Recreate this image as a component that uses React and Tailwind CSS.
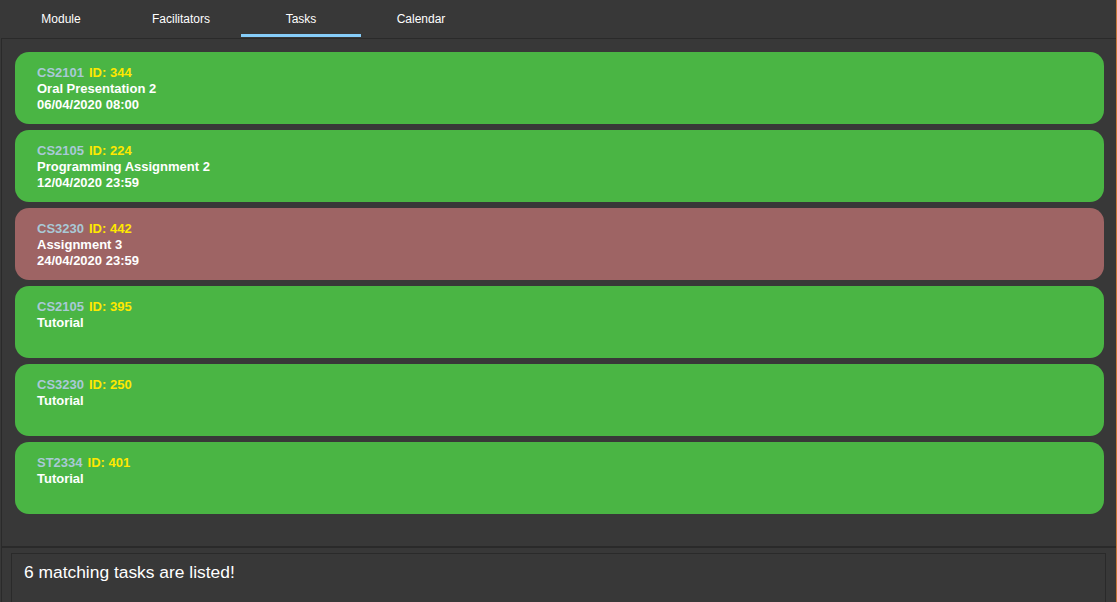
import React from 'react';

const TABS = ['Module', 'Facilitators', 'Tasks', 'Calendar'];

const TASKS = [
  { module: 'CS2101', id: 344, title: 'Oral Presentation 2', due: '06/04/2020 08:00', overdue: false },
  { module: 'CS2105', id: 224, title: 'Programming Assignment 2', due: '12/04/2020 23:59', overdue: false },
  { module: 'CS3230', id: 442, title: 'Assignment 3', due: '24/04/2020 23:59', overdue: true },
  { module: 'CS2105', id: 395, title: 'Tutorial', due: '', overdue: false },
  { module: 'CS3230', id: 250, title: 'Tutorial', due: '', overdue: false },
  { module: 'ST2334', id: 401, title: 'Tutorial', due: '', overdue: false },
];

function TaskCard({ task }) {
  return (
    <div
      className={`h-[72px] rounded-[14px] px-[22px] pt-[13px] text-[13px] font-bold leading-[16px] ${
        task.overdue ? 'bg-[#9e6464]' : 'bg-[#4ab544]'
      }`}
    >
      <div className="flex gap-[5px]">
        <span className="text-[#a9c9d6]">{task.module}</span>
        <span className="text-[#ffe800]">ID: {task.id}</span>
      </div>
      <div className="text-white">{task.title}</div>
      {task.due && <div className="text-white">{task.due}</div>}
    </div>
  );
}

export default function App() {
  return (
    <div
      className="flex h-[602px] w-[1117px] flex-col overflow-hidden border-r border-[#c9783a] bg-[#383838]"
      style={{ fontFamily: '"Liberation Sans", Arial, sans-serif' }}
    >
      <div className="flex h-[38px] shrink-0 pl-[1px]">
        {TABS.map((tab) => (
          <div key={tab} className="flex w-[120px] flex-col items-center">
            <div className="pt-[12px] text-[12px] leading-[15px] text-white">{tab}</div>
            <div className="flex-1" />
            {tab === 'Tasks' && <div className="mb-[1px] h-[3px] w-full bg-[#86cdf9]" />}
          </div>
        ))}
      </div>

      <div className="ml-[1px] flex h-[510px] shrink-0 flex-col gap-[6px] border-t border-l border-b-2 border-[#2a2a2a] pt-[13px] pl-[13px] pr-[12px]">
        {TASKS.map((task) => (
          <TaskCard key={task.id} task={task} />
        ))}
      </div>

      <div className="ml-[1px] flex-1 border-l border-[#2a2a2a] pt-[5px] pl-[9px] pr-[10px]">
        <div className="h-full border-t border-l border-r border-[#2a2a2a] px-[12px] pt-[8px] text-[17.4px] leading-[20px] text-white">
          6 matching tasks are listed!
        </div>
      </div>
    </div>
  );
}
